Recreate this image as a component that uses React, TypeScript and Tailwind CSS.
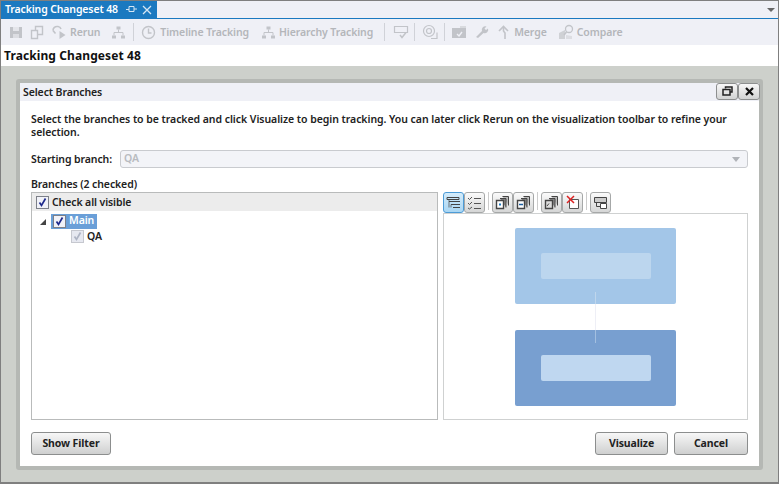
import React from "react";

const C = "#c2c4c9";

function Save() {
  return (
    <svg width="16" height="16" viewBox="0 0 16 16" className="shrink-0">
      <path d="M2 3h12v11H2z" fill={C} />
      <path d="M5 3h6v4H5z" fill="#e4e5ea" />
      <path d="M5 10h6v4H5z" fill="#dcdde2" />
    </svg>
  );
}
function CopyIcon() {
  return (
    <svg width="16" height="16" viewBox="0 0 16 16" fill="none" stroke={C} strokeWidth="1.4" className="shrink-0">
      <path d="M6.500 2.500h7v8h-7z" />
      <path d="M2.500 6.500h6v8h-6z" fill="#eff0f6" />
    </svg>
  );
}
function RerunIcon() {
  return (
    <svg width="16" height="16" viewBox="0 0 16 16" fill="none" stroke={C} strokeWidth="1.600" className="shrink-0">
      <path d="M2 6.500a4 4 0 0 1 4-4h1a3.500 3.500 0 0 1 3 2.500" />
      <path d="M2 6.500l2.500 3" />
      <path d="M8.500 7l6 4-6 4z" fill={C} stroke="none" />
    </svg>
  );
}
function Hierarchy() {
  return (
    <svg width="15" height="15" viewBox="0 0 15 15" fill="none" className="shrink-0">
      <path d="M5.500 1.500h4v3h-4zM1 10.500h4v3H1zM10 10.500h4v3h-4z" fill={C} />
      <path d="M7.500 4.500v3M3 10.500v-3h9v3" stroke={C} />
    </svg>
  );
}
function ClockIcon() {
  return (
    <svg width="15" height="15" viewBox="0 0 15 15" fill="none" stroke={C} strokeWidth="1.400" className="shrink-0">
      <circle cx="7.500" cy="7.500" r="6" />
      <path d="M7.500 3.500v4.500h3" />
    </svg>
  );
}
function ChangesetIcon() {
  return (
    <svg width="16" height="14" viewBox="0 0 16 14" fill="none" stroke={C} strokeWidth="1.200" className="shrink-0">
      <path d="M1.500 1.500h13v6h-13z" />
      <path d="M7 10l2 2.500 4-5" strokeWidth="1.500" />
    </svg>
  );
}
function CopyrightIcon() {
  return (
    <svg width="16" height="16" viewBox="0 0 16 16" fill="none" stroke={C} strokeWidth="1.200" className="shrink-0">
      <circle cx="7" cy="7" r="5.500" />
      <circle cx="7" cy="7" r="2.500" />
      <path d="M9 14.500h6v-6" />
    </svg>
  );
}
function FolderCheck() {
  return (
    <svg width="16" height="14" viewBox="0 0 16 14" className="shrink-0">
      <path d="M1 3h14v10H1z" fill={C} />
      <path d="M9 1h6v2H9z" fill="#d8dade" />
      <path d="M6 9l2 2 3-4" fill="none" stroke="#eff0f6" strokeWidth="1.400" />
    </svg>
  );
}
function Wrench() {
  return (
    <svg width="14" height="14" viewBox="0 0 14 14" className="shrink-0">
      <path d="M1 12l6-6a3.500 3.500 0 0 1 4.500-4.500L9.500 3.500 11 5l2-1.500A3.500 3.500 0 0 1 8.500 8L3 13z" fill={C} />
    </svg>
  );
}
function MergeIcon() {
  return (
    <svg width="13" height="15" viewBox="0 0 13 15" fill="none" stroke={C} strokeWidth="1.600" className="shrink-0">
      <path d="M2 6l4.500-4.500L11 6" />
      <path d="M6.500 2v4l1.500 2v6" />
    </svg>
  );
}
function CompareIcon() {
  return (
    <svg width="17" height="16" viewBox="0 0 17 16" fill="none" className="shrink-0">
      <path d="M1 15V9l6-3v9z" fill="#cfd1d5" />
      <path d="M8 15v-4l6 1v3z" fill="#dcdde2" />
      <circle cx="11" cy="5" r="3.500" stroke={C} strokeWidth="1.300" />
      <path d="M8.500 8L6 11" stroke={C} strokeWidth="1.500" />
    </svg>
  );
}

function Sep() {
  return <div className="w-px h-[18px] shrink-0 bg-[#d0d2d8]" />;
}

function Check({ muted = false }: { muted?: boolean }) {
  return (
    <span className={`w-[13px] h-[13px] shrink-0 flex items-center justify-center border ${muted ? "border-[#c6c8cf] bg-[#e6e8f0]" : "border-[#7d8089] bg-[#f1f2f8]"}`}>
      <svg width="11" height="11" viewBox="0 0 11 11" fill="none">
        <path d="M2.500 5.500l2 3 4-7" stroke={muted ? "#aeb4c4" : "#1f2a8c"} strokeWidth="1.700" />
      </svg>
    </span>
  );
}

function ToolBtn({ active = false, children }: { active?: boolean; children: React.ReactNode }) {
  return (
    <div className={`w-[21px] h-[21px] rounded-[3px] border flex items-center justify-center ${active ? "border-[#4d9bd6] bg-gradient-to-b from-[#d4ecfb] to-[#a9d6f3]" : "border-[#a6a8a8] bg-gradient-to-b from-[#fbfbfb] to-[#d5d6d6]"}`}>
      {children}
    </div>
  );
}

function Btn({ w, children }: { w: string; children: React.ReactNode }) {
  return (
    <div className={`${w} h-[23px] rounded-[3px] border border-[#8c8e8e] bg-gradient-to-b from-[#f7f7f7] to-[#cfd0d0] flex items-center justify-center text-[10.5px] tracking-[-0.1px] font-bold text-[#222]`}>
      {children}
    </div>
  );
}

function Stack({ fill = "#fff", mark }: { fill?: string; mark?: React.ReactNode }) {
  return (
    <svg width="15" height="15" viewBox="0 0 15 15" fill="none" stroke="#444">
      <path d="M7.500 1.500h6v9" fill="#bbb" />
      <path d="M5 3.500h6v9" fill="#888" />
      <path d="M1.500 5.500h7v8h-7z" fill={fill} strokeWidth="1.400" />
      {mark}
    </svg>
  );
}

export default function App() {
  return (
    <div className="w-[779px] h-[484px] overflow-hidden flex flex-col bg-[#cdd0cb] border-t border-x border-b-2 border-[#7f7f7f] font-['Noto_Sans','DejaVu_Sans',sans-serif] text-[#222]">
      <div className="h-[17px] shrink-0 flex bg-[#eff0f6]">
        <div className="w-[156px] shrink-0 bg-[#1b79c0] text-white text-[10.5px] tracking-[-0.13px] font-semibold flex items-center pl-[4px] leading-none whitespace-nowrap">
          <span className="w-[121px] shrink-0">Tracking Changeset 48</span>
          <svg width="11" height="11" viewBox="0 0 11 11" className="shrink-0" fill="none" stroke="#d5e6f4">
            <path d="M3 2.500h5v5H3zM0 5.500h3M8 5h3" />
          </svg>
          <svg width="10" height="10" viewBox="0 0 10 10" className="ml-[5px] shrink-0" fill="none" stroke="#d5e6f4" strokeWidth="1.300">
            <path d="M1 1l8 8M9 1l-8 8" />
          </svg>
        </div>
        <div className="flex-1 flex justify-end items-center pr-[3px]">
          <div className="w-0 h-0 border-x-[4px] border-x-transparent border-t-[4px] border-t-[#666]" />
        </div>
      </div>
      <div className="h-[1px] shrink-0 bg-[#1b79c0]" />
      <div className="h-[26px] shrink-0 bg-[#eff0f6] flex items-center pl-[7px] text-[10.500px] tracking-[-0.1px] font-semibold text-[#b4b6ba] whitespace-nowrap">
        <Save />
        <span className="w-[5px] shrink-0" />
        <CopyIcon />
        <span className="w-[6px] shrink-0" />
        <RerunIcon />
        <span className="ml-[3px] pt-[2px]">Rerun</span>
        <span className="w-[11px] shrink-0" />
        <Hierarchy />
        <span className="w-[7px] shrink-0" />
        <Sep />
        <span className="w-[7px] shrink-0" />
        <ClockIcon />
        <span className="ml-[4px] pt-[2px]">Timeline Tracking</span>
        <span className="w-[12px] shrink-0" />
        <Hierarchy />
        <span className="ml-[3px] pt-[2px]">Hierarchy Tracking</span>
        <span className="w-[11px] shrink-0" />
        <Sep />
        <span className="w-[8px] shrink-0" />
        <ChangesetIcon />
        <span className="w-[5px] shrink-0" />
        <Sep />
        <span className="w-[7px] shrink-0" />
        <CopyrightIcon />
        <span className="w-[6px] shrink-0" />
        <Sep />
        <span className="w-[6px] shrink-0" />
        <FolderCheck />
        <span className="w-[8px] shrink-0" />
        <Wrench />
        <span className="w-[8px] shrink-0" />
        <MergeIcon />
        <span className="ml-[4px] pt-[2px]">Merge</span>
        <span className="w-[11px] shrink-0" />
        <CompareIcon />
        <span className="ml-[2px] pt-[2px]">Compare</span>
      </div>
      <div className="h-[21px] shrink-0 bg-white flex items-center pl-[3px] text-[12px] tracking-[0.1px] font-bold text-[#111]">
        Tracking Changeset 48
      </div>
      <div className="flex-1 min-h-0 pt-[13px] pl-[15px] pr-[15px] pb-[12px]">
        <div className="h-full rounded-[3px] border-[4px] border-[#b5b8b4] bg-white flex flex-col">
          <div className="h-[18px] shrink-0 bg-[#eff0f6] flex items-center justify-between pl-[3px] text-[10.500px] tracking-[-0.1px] font-semibold">
            <span className="pt-[2px]">Select Branches</span>
            <div className="flex -translate-y-[1px] mr-[-1px]">
              <div className="w-[22px] h-[17px] rounded-[3px] border border-[#8d8f8f] bg-gradient-to-b from-[#f8f8f8] to-[#d2d3d3] flex items-center justify-center">
                <svg width="11" height="10" viewBox="0 0 11 10" fill="none" stroke="#222" strokeWidth="1.500">
                  <path d="M3.500 2.500V1h6.500v5H8" />
                  <path d="M1 3.500h7v5.500H1z" />
                </svg>
              </div>
              <div className="w-[22px] h-[17px] rounded-[3px] border border-[#8d8f8f] bg-gradient-to-b from-[#f8f8f8] to-[#d2d3d3] flex items-center justify-center">
                <svg width="9" height="9" viewBox="0 0 9 9" fill="none" stroke="#111" strokeWidth="2.200">
                  <path d="M1 1l7 7M8 1L1 8" />
                </svg>
              </div>
            </div>
          </div>
          <div className="flex-1 min-h-0 flex flex-col px-[11px] pt-[12px] text-[10.500px] tracking-[-0.1px] font-semibold">
            <p className="leading-[13px] m-0 tracking-[-0.05px]">
              Select the branches to be tracked and click Visualize to begin tracking. You can later click Rerun on the visualization toolbar to refine your selection.
            </p>
            <div className="mt-[11px] h-[18px] flex items-center">
              <span className="w-[89px] shrink-0 pt-[1px]">Starting branch:</span>
              <div className="flex-1 h-full rounded-[3px] border border-[#c9cbcf] bg-[#f3f4f8] flex items-center justify-between pl-[3px] pr-[7px] text-[#b8bbc0]">
                <span>QA</span>
                <div className="w-0 h-0 border-x-[4px] border-x-transparent border-t-[5px] border-t-[#b0b3b8]" />
              </div>
            </div>
            <div className="mt-[9px] h-[14px] leading-[15px]">Branches (2 checked)</div>
            <div className="h-[228px] flex gap-[5px] mt-[1px]">
              <div className="w-[407px] border border-[#b9bbbb]">
                <div className="h-[18px] bg-[#ececec] flex items-center pl-[4px] gap-[3px]">
                  <Check />
                  <span className="pt-[1px]">Check all visible</span>
                </div>
                <div className="pl-[8px] mt-[3px] h-[15px] flex items-center">
                  <div className="w-0 h-0 border-l-[6px] border-l-transparent border-b-[6px] border-b-[#444] mr-[5px]" />
                  <div className="h-[15px] bg-[#6a9fd8] flex items-center pl-[2px] pr-[3px] gap-[3px] text-white">
                    <Check />
                    <span className="pb-[1px]">Main</span>
                  </div>
                </div>
                <div className="pl-[39px] h-[15px] flex items-center gap-[3px]">
                  <Check muted />
                  <span>QA</span>
                </div>
              </div>
              <div className="flex-1 flex flex-col">
                <div className="h-[21px] flex items-start">
                  <ToolBtn active>
                    <svg width="15" height="14" viewBox="0 0 15 14" fill="none" stroke="#444">
                      <path d="M1 1.500h12v2H1zM3 5.500h11M5 8.500h9M7 11.500h7" />
                      <path d="M3 3.500v8M5 8.500v3" strokeWidth="0.700" />
                    </svg>
                  </ToolBtn>
                  <ToolBtn>
                    <svg width="15" height="14" viewBox="0 0 15 14" fill="none" stroke="#555">
                      <path d="M1 2l1.500 1.500L5 1M1 7l1.500 1.500L5 6M1 12l1.500 1L5 11M7 2.500h7M7 7.500h7M7 12.500h7" />
                    </svg>
                  </ToolBtn>
                  <span className="w-px h-[18px] mx-[3px] bg-[#ccc]" />
                  <ToolBtn>
                    <Stack mark={<path d="M4 9.500h2" stroke="#1b79c0" strokeWidth="2" />} />
                  </ToolBtn>
                  <ToolBtn>
                    <Stack mark={<path d="M3 9.500h4" stroke="#1b5fa0" strokeWidth="1.500" />} />
                  </ToolBtn>
                  <span className="w-px h-[18px] mx-[3px] bg-[#ccc]" />
                  <ToolBtn>
                    <Stack fill="#ddd" mark={<path d="M3 11l2-2.500" stroke="#444" />} />
                  </ToolBtn>
                  <ToolBtn>
                    <svg width="15" height="15" viewBox="0 0 15 15" fill="none">
                      <path d="M4.500 4.500h9v9h-9z" stroke="#555" fill="#fff" />
                      <path d="M2 1l7 7M9 1L2 8" stroke="#d22" strokeWidth="1.500" />
                    </svg>
                  </ToolBtn>
                  <span className="w-px h-[18px] mx-[3px] bg-[#ccc]" />
                  <ToolBtn>
                    <svg width="15" height="14" viewBox="0 0 15 14" fill="none" stroke="#444">
                      <path d="M1.500 1.500h12v5h-12z" fill="#ccc" />
                      <path d="M3.500 6.500v4h4" />
                      <path d="M7.500 7.500h6v5h-6z" fill="#fff" />
                    </svg>
                  </ToolBtn>
                </div>
                <div className="flex-1 border border-[#cfd1d1] flex flex-col items-center pt-[14px]">
                  <div className="relative w-[161px] h-[76px] rounded-[2px] bg-[#a3c6e8] flex items-center justify-center">
                    <div className="w-[110px] h-[26px] rounded-[2px] bg-[#bcd6ee]" />
                    <div className="absolute left-[80px] top-[64px] w-px h-[12px] bg-[#bfd6ec]" />
                  </div>
                  <div className="w-px h-[26px] bg-[#eeeff6]" />
                  <div className="relative w-[161px] h-[76px] rounded-[2px] bg-[#789fd0] flex items-center justify-center">
                    <div className="w-[110px] h-[26px] rounded-[2px] bg-[#bfd7f0]" />
                    <div className="absolute left-[80px] top-0 w-px h-[13px] bg-[#a3bfe0]" />
                  </div>
                </div>
              </div>
            </div>
            <div className="mt-[12px] flex items-start">
              <Btn w="w-[80px]">Show Filter</Btn>
              <div className="ml-auto flex gap-[6px]">
                <Btn w="w-[73px]">Visualize</Btn>
                <Btn w="w-[74px]">Cancel</Btn>
              </div>
            </div>
          </div>
        </div>
      </div>
    </div>
  );
}
